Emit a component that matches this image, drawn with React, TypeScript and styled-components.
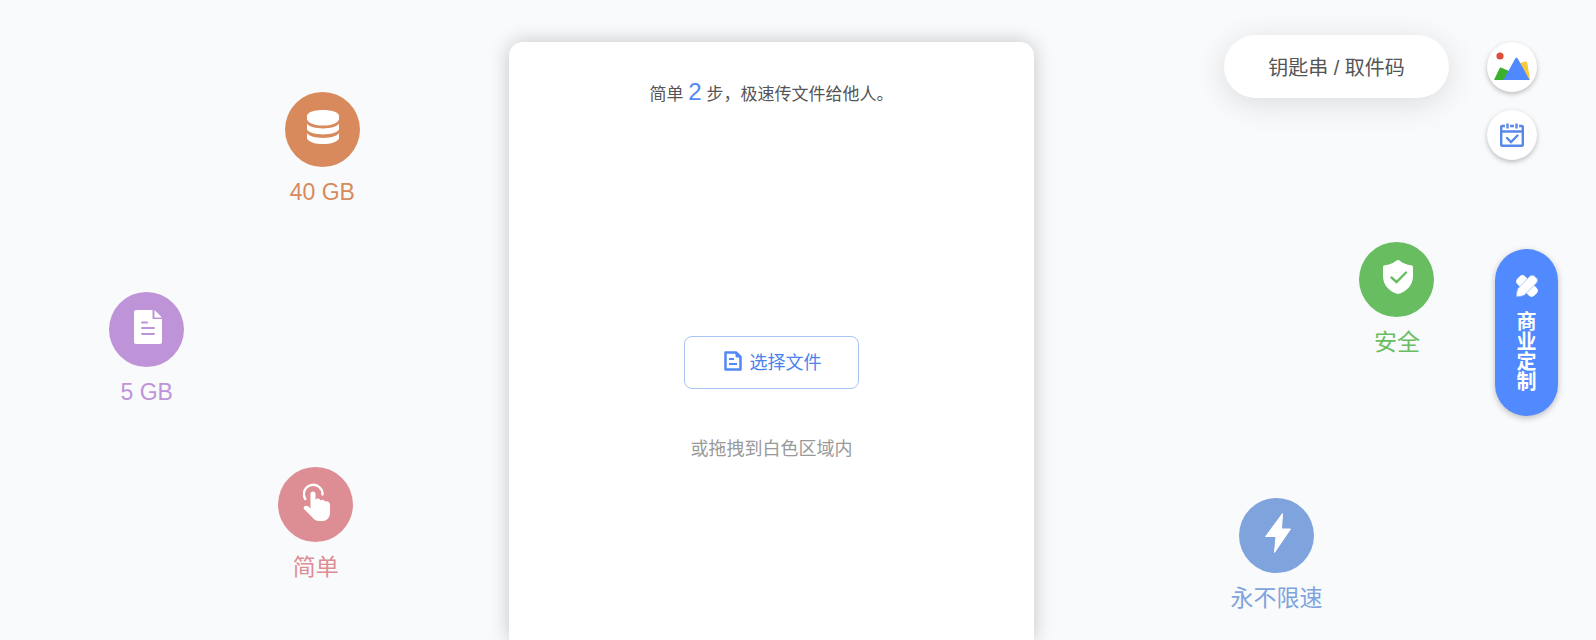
import React from "react";
import styled, { createGlobalStyle } from "styled-components";

const GlobalStyle = createGlobalStyle`
  *, *::before, *::after { box-sizing: border-box; }
  body {
    margin: 0;
    background: #f8fafc;
    color: #555;
    font-family: "Liberation Sans", "Noto Sans CJK SC", sans-serif;
    font-size: 18px;
  }
  button { font: inherit; cursor: pointer; }
`;

const Page = styled.div`
  display: grid;
  grid-template-columns: 509fr 525px 562fr;
  min-height: 100vh;
  overflow: hidden;
`;

const LeftSide = styled.section`
  padding-top: 92px;
`;

const RightSide = styled.section`
  display: grid;
  grid-template-columns: 1fr 71px;
  column-gap: 38px;
  align-items: start;
  padding-right: 38px;
`;

const RightMain = styled.div`
  display: flex;
  flex-direction: column;
  padding-top: 35px;
`;

const FeatureBox = styled.div<{ $color: string; $shift: string; $top: number }>`
  display: flex;
  flex-direction: column;
  align-items: center;
  width: 95px;
  margin-top: ${(p) => p.$top}px;
  margin-left: ${(p) => p.$shift};
  color: ${(p) => p.$color};
`;

const Disc = styled.div`
  display: grid;
  place-items: center;
  width: 75px;
  height: 75px;
  padding: 0 0 6px 2px;
  border-radius: 50%;
  background: currentColor;
`;

const FeatureLabel = styled.div`
  margin-top: 10px;
  font-size: 23px;
  line-height: 30px;
  white-space: nowrap;
`;

const Card = styled.main`
  display: flex;
  flex-direction: column;
  align-items: center;
  margin-top: 42px;
  padding-top: 35px;
  border-radius: 14px 14px 0 0;
  background: #fff;
  box-shadow: 0 0 20px rgba(0, 0, 0, 0.22);
`;

const Title = styled.h1`
  margin: 0;
  font-size: 17px;
  font-weight: inherit;
  line-height: 30px;
`;

const Step = styled.span`
  color: #5088f7;
  font-size: 24px;
`;

const PickButton = styled.button`
  display: flex;
  align-items: center;
  justify-content: center;
  gap: 8px;
  width: 175px;
  height: 53px;
  margin-top: 226px;
  padding: 0 0 4px 2px;
  border: 1px solid #a9c3f3;
  border-radius: 8px;
  background: #fff;
  color: #4a82ee;
`;

const Hint = styled.p`
  margin: 45px 0 0;
  color: #999;
  line-height: 30px;
`;

const CodeButton = styled.button`
  align-self: flex-end;
  width: 225px;
  height: 63px;
  padding: 0;
  border: 0;
  border-radius: 32px;
  background: #fff;
  box-shadow: 0 6px 32px rgba(0, 0, 0, 0.12);
  color: #555;
  font-size: 20px;
`;

const Rail = styled.nav`
  display: flex;
  flex-direction: column;
  gap: 18px;
  padding-top: 42px;
`;

const RoundButton = styled.button`
  display: grid;
  place-items: center;
  width: 50px;
  height: 50px;
  padding: 0;
  border: 0;
  border-radius: 50%;
  background: #fff;
  box-shadow: 0 2px 5px rgba(0, 0, 0, 0.25);
`;

const CustomLink = styled.a`
  display: flex;
  flex-direction: column;
  align-items: center;
  align-self: flex-end;
  gap: 15px;
  width: 63px;
  height: 167px;
  margin-top: 71px;
  padding-top: 26px;
  border-radius: 32px;
  background: #5189ff;
  box-shadow: 0 2px 6px rgba(0, 0, 0, 0.25);
  color: #fff;
  font-size: 20px;
  font-weight: 700;
  line-height: 20px;
  text-decoration: none;
`;

const VerticalText = styled.span`
  width: 20px;
  word-break: break-all;
`;

const DiskIcon = () => (
  <svg width="32" height="34" viewBox="0 0 32 34" fill="#fff" aria-hidden="true">
    <path d="M16 0C24 0 32 2 32 6V9.500C30 13.500 24 15.500 16 15.500S2 13.500 0 9.500V6C0 2 8 0 16 0Z" />
    <path d="M0 13.500C4 20 28 20 32 13.500V19.500C28 26 4 26 0 19.500Z" />
    <path d="M0 23C4 29.500 28 29.500 32 23V28.500C28 36 4 36 0 28.500Z" />
  </svg>
);

const PageIcon = () => (
  <svg width="28" height="34" viewBox="0 0 28 34" aria-hidden="true">
    <path fill="#fff" d="M2 0H18.500V9H28V32Q28 34 26 34H2Q0 34 0 32V2Q0 0 2 0ZM20.500 0L28 7.500H20.500Z" />
    <path stroke="#bf93d8" strokeWidth="2" strokeLinecap="round" d="M8 12.500H13M8 18H20M8 24H20" />
  </svg>
);

const TapIcon = () => (
  <svg width="28" height="38" viewBox="0 0 28 38" aria-hidden="true">
    <path fill="none" stroke="#fff" strokeWidth="2.400" strokeLinecap="round" d="M2.300 16A9.300 9.300 0 1 1 19.500 11.500" />
    <path fill="#fff" d="M7.500 11Q7.500 8.500 10 8.500T12.500 11V17C14 14.500 17 15.500 17.500 17.500C19 16 21.500 16.500 22 18.700C24 17.500 27 19 27 21.500V30C27 34 24 38 20 38H16C13 38 11 36.500 9 34L1 26Q0 24 2 23T6 24L7.500 25.500Z" />
  </svg>
);

const ShieldIcon = () => (
  <svg width="30" height="34" viewBox="0 0 30 34" aria-hidden="true">
    <path fill="#fff" d="M13.500 .6Q15 -.4 16.500 .6C20 3.500 24 5 28 5.200Q30 5.300 30 7V16C30 25 24 31.500 15 34C6 31.500 0 25 0 16V7Q0 5.300 2 5.200C6 5 10 3.500 13.500 .6Z" />
    <path fill="none" stroke="#67bd5f" strokeWidth="2.400" strokeLinecap="round" d="M8.500 17.500L13.500 22L23 12.500" />
  </svg>
);

const BoltIcon = () => (
  <svg width="26" height="40" viewBox="0 0 26 40" fill="#fff" stroke="#fff" strokeLinejoin="round" aria-hidden="true">
    <path d="M17.500 .6L.6 23.500H11L9.500 39.500L25.500 16H16.500Z" />
  </svg>
);

const FileIcon = () => (
  <svg width="18" height="20" viewBox="0 0 18 20" fill="none" stroke="#5088f7" strokeWidth="2.500" strokeLinejoin="round" aria-hidden="true">
    <path d="M1.500 1.500H12L16.500 6V18.500H1.500Z" />
    <path fill="#5088f7" strokeWidth="1" d="M12 2V6H16Z" />
    <path strokeWidth="2" d="M5 8H10M5 13H13" />
  </svg>
);

const MountainIcon = () => (
  <svg width="36" height="30" viewBox="0 0 36 30" aria-hidden="true">
    <circle cx="6" cy="4" r="3.600" fill="#dc4e3c" />
    <path fill="#f7c839" d="M26 11L31.500 9.500Q33 9 33.300 11L36 28H30Z" />
    <path fill="#3bb02f" d="M0 28L5.500 16.500Q6.300 15 8 16L15 19L18 28Z" />
    <path fill="#5088ff" d="M9.500 28L21 7Q22.500 4 24 7L35.500 28Z" />
  </svg>
);

const CalendarIcon = () => (
  <svg width="24" height="24" viewBox="0 0 24 24" fill="none" stroke="#5888e8" strokeWidth="2.400" aria-hidden="true">
    <path d="M5 3H2.200Q1.200 3 1.200 4V21.800Q1.200 22.800 2.200 22.800H21.800Q22.800 22.800 22.800 21.800V4Q22.800 3 21.800 3H19M10 3H14M7.500 .5V5.500M16.500 .5V5.500M1 8.500H23" />
    <path strokeLinecap="round" d="M7 15L11 19L17.500 12.500" />
  </svg>
);

const ToolsIcon = () => (
  <svg width="22" height="22" viewBox="0 0 22 22" aria-hidden="true">
    <rect x="-1" y="5.500" width="24" height="11" rx="4" fill="#fff" transform="rotate(45 11 11)" />
    <path
      fill="#fff"
      stroke="#8db2ff"
      strokeWidth=".7"
      d="M13.500 1.500Q15.500 -.3 18 .7L21 3.500Q22.300 6 20.500 8L8.500 20Q5 21.800 .5 21.500Q.2 17 2 13.500Z"
    />
  </svg>
);

type FeatureProps = {
  color: string;
  shift: string;
  top?: number;
  label: string;
  children: React.ReactNode;
};

const Feature = ({ color, shift, top = 0, label, children }: FeatureProps) => (
  <FeatureBox $color={color} $shift={shift} $top={top}>
    <Disc>{children}</Disc>
    <FeatureLabel>{label}</FeatureLabel>
  </FeatureBox>
);

export default function App() {
  return (
    <>
      <GlobalStyle />
      <Page>
        <LeftSide>
          <Feature color="#d88a5c" shift="54%" label="40 GB"><DiskIcon /></Feature>
          <Feature color="#bf93d8" shift="19.5%" top={85} label="5 GB"><PageIcon /></Feature>
          <Feature color="#dd8d94" shift="52.7%" top={60} label="简单"><TapIcon /></Feature>
        </LeftSide>
        <Card>
          <Title>简单 <Step>2</Step> 步，极速传文件给他人。</Title>
          <PickButton type="button"><FileIcon />选择文件</PickButton>
          <Hint>或拖拽到白色区域内</Hint>
        </Card>
        <RightSide>
          <RightMain>
            <CodeButton type="button">钥匙串 / 取件码</CodeButton>
            <Feature color="#67bd5f" shift="76%" top={144} label="安全"><ShieldIcon /></Feature>
            <Feature color="#7fa3dc" shift="47%" top={141} label="永不限速"><BoltIcon /></Feature>
          </RightMain>
          <Rail>
            <RoundButton type="button" aria-label="图片"><MountainIcon /></RoundButton>
            <RoundButton type="button" aria-label="日历"><CalendarIcon /></RoundButton>
            <CustomLink href="#custom"><ToolsIcon /><VerticalText>商业定制</VerticalText></CustomLink>
          </Rail>
        </RightSide>
      </Page>
    </>
  );
}
